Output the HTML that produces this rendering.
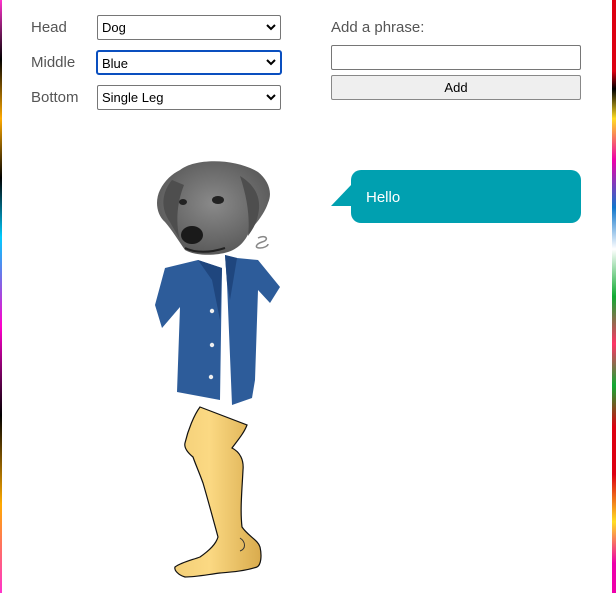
<!DOCTYPE html>
<html><head><style>
body{margin:0;width:616px;height:593px;background:#fff;position:relative;overflow:hidden;font-family:"Liberation Sans",sans-serif}
.lbl{position:absolute;left:31px;font-size:15px;color:#555;font-weight:300}
.sel{position:absolute;left:97px;width:182px;height:23px;border:1px solid #767676;border-radius:2px;font-size:13px;line-height:23px;box-sizing:content-box}
.sel span{position:absolute;left:4px;color:#000}
.sel svg{position:absolute;right:4px;top:8px}
</style></head><body>
<div style="position:absolute;left:0;top:0;width:2px;height:593px;background:linear-gradient(#f3c,#000 10%,#fa0 20%,#000 30%,#0cf 40%,#f0c 55%,#000 70%,#fa0 85%,#f3c)"></div>
<div style="position:absolute;left:612px;top:0;width:4px;height:593px;background:linear-gradient(#d01 0,#d01 12%,#000 15%,#fd2 20%,#e0a 27%,#17c 35%,#fff 42%,#1a3 50%,#f36 58%,#1a3 65%,#d01 72%,#d01 80%,#fd2 88%,#e0a 95%)"></div>

<div class="lbl" style="top:19px">Head</div>
<div class="lbl" style="top:54px">Middle</div>
<div class="lbl" style="top:89px">Bottom</div>
<div class="sel" style="top:15px"><span>Dog</span><svg width="10" height="7"><path d="M1 1l4 4 4-4" stroke="#000" stroke-width="2" fill="none"/></svg></div>
<div class="sel" style="top:50px;border:2px solid #0a4fbf;left:96px;height:21px;width:182px;border-radius:3px"><span>Blue</span><svg width="10" height="7" style="top:7px"><path d="M1 1l4 4 4-4" stroke="#000" stroke-width="2" fill="none"/></svg></div>
<div class="sel" style="top:85px"><span>Single Leg</span><svg width="10" height="7"><path d="M1 1l4 4 4-4" stroke="#000" stroke-width="2" fill="none"/></svg></div>

<div style="position:absolute;left:331px;top:19px;font-size:15px;color:#555;font-weight:300">Add a phrase:</div>
<div style="position:absolute;left:331px;top:45px;width:248px;height:23px;border:1px solid #767676;border-radius:2px"></div>
<div style="position:absolute;left:331px;top:75px;width:248px;height:23px;border:1px solid #888;border-radius:2px;background:#efefef;font-size:13px;text-align:center;line-height:23px">Add</div>

<div style="position:absolute;left:351px;top:170px;width:230px;height:53px;background:#00a0b0;border-radius:10px"></div>
<svg style="position:absolute;left:330px;top:180px" width="24" height="30"><path d="M22 4L1 26L22 26Z" fill="#00a0b0"/></svg>
<div style="position:absolute;left:366px;top:189px;color:#fff;font-size:15px;font-weight:300">Hello</div>

<svg style="position:absolute;left:0;top:0" width="616" height="593">
<defs>
<radialGradient id="dg" cx="50%" cy="45%" r="60%"><stop offset="0" stop-color="#8a8a8a"/><stop offset="1" stop-color="#555"/></radialGradient>
<linearGradient id="lg" x1="0" x2="1"><stop offset="0" stop-color="#f3cf78"/><stop offset=".4" stop-color="#fbd983"/><stop offset="1" stop-color="#d9ab4d"/></linearGradient>
</defs>
<path d="M180 170C195 158 235 158 258 172C268 180 273 192 268 203C265 212 258 222 250 230C246 240 240 248 228 252C215 256 195 256 185 250C178 240 172 230 165 222C156 214 155 200 160 190C165 180 172 174 180 170Z" fill="url(#dg)"/>
<path d="M172 180C162 192 160 208 170 222C174 230 178 235 180 240C176 225 176 205 184 185Z" fill="#4e4e4e"/>
<path d="M240 176C255 185 262 198 258 215C256 225 252 230 248 236C250 220 248 200 240 176Z" fill="#4e4e4e"/>
<ellipse cx="183" cy="202" rx="4" ry="3" fill="#222"/><ellipse cx="218" cy="200" rx="6" ry="4" fill="#222"/>
<ellipse cx="192" cy="235" rx="11" ry="9" fill="#1a1a1a"/>
<path d="M185 248C195 253 210 253 225 248" stroke="#222" stroke-width="2" fill="none"/>
<path d="M258 238C266 234 270 240 262 242C256 244 254 248 260 248C264 248 268 246 268 244" stroke="#888" stroke-width="1.5" fill="none"/>
<path d="M165 268L198 260L222 268L220 400L177 392L180 307L162 328L155 305Z" fill="#2d5c9a"/>
<path d="M225 255L237 258L258 260L280 287L270 303L258 290L255 380L252 398L232 405L227 283Z" fill="#2d5c9a"/>
<path d="M198 260L222 268L220 320L212 280Z" fill="#1f467e"/>
<path d="M225 255L237 258L230 300L227 283Z" fill="#1f467e"/>
<circle cx="212" cy="311" r="2.2" fill="#eee"/><circle cx="212" cy="345" r="2.2" fill="#eee"/><circle cx="211" cy="377" r="2.2" fill="#eee"/>
<path d="M200 407L247 425C244 433 238 440 232 448C240 452 244 460 243 470C242 490 240 510 242 527C248 536 258 540 260 547C262 556 261 565 257 567C245 571 232 572 220 573C205 575 195 577 185 577C178 575 174 570 175 567C182 562 192 560 200 557C210 550 216 544 218 537C212 515 208 500 203 483C199 472 195 463 193 457C187 452 184 447 185 443C188 430 194 415 200 407Z" fill="url(#lg)" stroke="#111" stroke-width="1.2"/>
<path d="M240 538C246 542 246 549 240 551" stroke="#333" fill="none"/>
</svg>
</body></html>
